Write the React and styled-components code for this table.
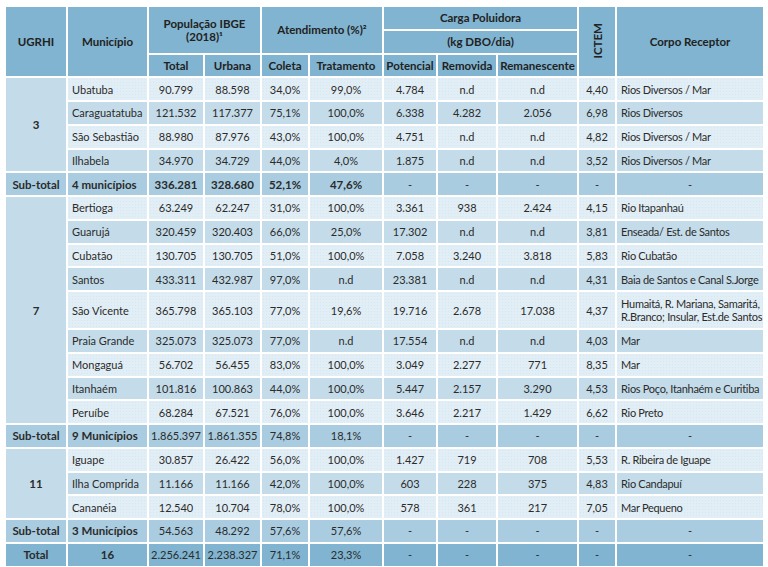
import React from "react";
import styled, { createGlobalStyle } from "styled-components";

const GlobalStyle = createGlobalStyle`
  html, body {
    margin: 0;
    padding: 0;
    background: #ffffff;
  }
  body {
    font-family: Lato, "Liberation Sans", Arial, sans-serif;
    color: #2b2b2b;
  }
`;

const Page = styled.div`
  padding: 5px 0 0 4px;
`;

const Table = styled.table`
  border-collapse: separate;
  border-spacing: 2px;
  table-layout: fixed;
  width: 761px;
  font-size: 11px;
`;

const HeadCell = styled.th`
  background: #80b4d0;
  color: #222;
  font-weight: bold;
  font-size: 11.5px;
  text-align: center;
  vertical-align: middle;
  padding: 0;
  height: 21.75px;
  line-height: 13px;
`;

const Vertical = styled.span`
  display: inline-block;
  writing-mode: vertical-rl;
  transform: rotate(180deg);
`;

const colors = {
  light: "#e2eef5",
  mid: "#c4dce9",
  sub: "#a9cce0",
  total: "#80b4d0",
};

const Row = styled.tr`
  height: ${(p) => (p.$tall ? "36px" : "21.75px")};
`;

const Cell = styled.td`
  background-color: ${(p) => colors[p.$tone]};
  background-image: ${(p) =>
    p.$tone === "light"
      ? "radial-gradient(rgba(200,222,235,0.45) 0.6px, transparent 0.8px)"
      : "none"};
  background-size: 3px 3px;
  text-align: ${(p) => (p.$left ? "left" : "center")};
  padding: ${(p) => (p.$left ? "0 0 0 4px" : "0")};
  font-weight: ${(p) => (p.$bold ? "bold" : "normal")};
  font-size: ${(p) => (p.$bold ? "11.5px" : "11px")};
  letter-spacing: ${(p) => (p.$tight ? "-0.3px" : "normal")};
  vertical-align: middle;
  line-height: 13px;
  white-space: nowrap;
  overflow: hidden;
`;

const GroupCell = styled.td`
  background: #c4dce9;
  text-align: center;
  font-weight: bold;
  font-size: 11.5px;
  vertical-align: middle;
  padding: 0;
`;

const widths = [60, 79, 54, 55, 46, 72, 52, 58, 79, 36, 146];

const groups = [
  {
    id: "3",
    rows: [
      ["Ubatuba", "90.799", "88.598", "34,0%", "99,0%", "4.784", "n.d", "n.d", "4,40", "Rios Diversos / Mar"],
      ["Caraguatatuba", "121.532", "117.377", "75,1%", "100,0%", "6.338", "4.282", "2.056", "6,98", "Rios Diversos"],
      ["São Sebastião", "88.980", "87.976", "43,0%", "100,0%", "4.751", "n.d", "n.d", "4,82", "Rios Diversos / Mar"],
      ["Ilhabela", "34.970", "34.729", "44,0%", "4,0%", "1.875", "n.d", "n.d", "3,52", "Rios Diversos / Mar"],
    ],
    sub: ["4 municípios", "336.281", "328.680", "52,1%", "47,6%"],
    subBold: true,
  },
  {
    id: "7",
    rows: [
      ["Bertioga", "63.249", "62.247", "31,0%", "100,0%", "3.361", "938", "2.424", "4,15", "Rio Itapanhaú"],
      ["Guarujá", "320.459", "320.403", "66,0%", "25,0%", "17.302", "n.d", "n.d", "3,81", "Enseada/ Est. de Santos"],
      ["Cubatão", "130.705", "130.705", "51,0%", "100,0%", "7.058", "3.240", "3.818", "5,83", "Rio Cubatão"],
      ["Santos", "433.311", "432.987", "97,0%", "n.d", "23.381", "n.d", "n.d", "4,31", "Baia de Santos e Canal S.Jorge"],
      ["São Vicente", "365.798", "365.103", "77,0%", "19,6%", "19.716", "2.678", "17.038", "4,37", ["Humaitá, R. Mariana, Samaritá,", "R.Branco; Insular, Est.de Santos"]],
      ["Praia Grande", "325.073", "325.073", "77,0%", "n.d", "17.554", "n.d", "n.d", "4,03", "Mar"],
      ["Mongaguá", "56.702", "56.455", "83,0%", "100,0%", "3.049", "2.277", "771", "8,35", "Mar"],
      ["Itanhaém", "101.816", "100.863", "44,0%", "100,0%", "5.447", "2.157", "3.290", "4,53", "Rios Poço, Itanhaém e Curitiba"],
      ["Peruíbe", "68.284", "67.521", "76,0%", "100,0%", "3.646", "2.217", "1.429", "6,62", "Rio Preto"],
    ],
    sub: ["9 Municípios", "1.865.397", "1.861.355", "74,8%", "18,1%"],
    subBold: false,
  },
  {
    id: "11",
    rows: [
      ["Iguape", "30.857", "26.422", "56,0%", "100,0%", "1.427", "719", "708", "5,53", "R. Ribeira de Iguape"],
      ["Ilha Comprida", "11.166", "11.166", "42,0%", "100,0%", "603", "228", "375", "4,83", "Rio Candapuí"],
      ["Cananéia", "12.540", "10.704", "78,0%", "100,0%", "578", "361", "217", "7,05", "Mar Pequeno"],
    ],
    sub: ["3 Municípios", "54.563", "48.292", "57,6%", "57,6%"],
    subBold: false,
  },
];

function DataRow({ row, tone, group, span }) {
  const [name, ...vals] = row;
  const corpo = vals[8];
  const tall = Array.isArray(corpo);
  return (
    <Row $tall={tall}>
      {group && <GroupCell rowSpan={span}>{group}</GroupCell>}
      <Cell $tone={tone} $left>{name}</Cell>
      {vals.slice(0, 8).map((v, i) => (
        <Cell key={i} $tone={tone}>{v}</Cell>
      ))}
      <Cell $tone={tone} $left $tight>
        {tall ? (
          <>
            {corpo[0]}
            <br />
            {corpo[1]}
          </>
        ) : (
          corpo
        )}
      </Cell>
    </Row>
  );
}

function SubRow({ label, vals, bold, tone, centerName }) {
  const [name, ...nums] = vals;
  return (
    <Row>
      <Cell $tone={tone} $bold>{label}</Cell>
      <Cell $tone={tone} $left={!centerName} $bold>{name}</Cell>
      {nums.map((v, i) => (
        <Cell key={i} $tone={tone} $bold={bold}>{v}</Cell>
      ))}
      {["-", "-", "-", "-", "-"].map((v, i) => (
        <Cell key={"d" + i} $tone={tone}>{v}</Cell>
      ))}
    </Row>
  );
}

export default function App() {
  return (
    <Page>
      <GlobalStyle />
      <Table>
        <colgroup>
          {widths.map((w, i) => (
            <col key={i} style={{ width: w }} />
          ))}
        </colgroup>
        <thead>
          <tr>
            <HeadCell rowSpan={3}>UGRHI</HeadCell>
            <HeadCell rowSpan={3}>Município</HeadCell>
            <HeadCell colSpan={2} rowSpan={2}>
              População IBGE
              <br />
              (2018)¹
            </HeadCell>
            <HeadCell colSpan={2} rowSpan={2}>Atendimento (%)²</HeadCell>
            <HeadCell colSpan={3}>Carga Poluidora</HeadCell>
            <HeadCell rowSpan={3}>
              <Vertical>ICTEM</Vertical>
            </HeadCell>
            <HeadCell rowSpan={3}>Corpo Receptor</HeadCell>
          </tr>
          <tr>
            <HeadCell colSpan={3}>(kg DBO/dia)</HeadCell>
          </tr>
          <tr>
            <HeadCell>Total</HeadCell>
            <HeadCell>Urbana</HeadCell>
            <HeadCell>Coleta</HeadCell>
            <HeadCell>Tratamento</HeadCell>
            <HeadCell>Potencial</HeadCell>
            <HeadCell>Removida</HeadCell>
            <HeadCell>Remanescente</HeadCell>
          </tr>
        </thead>
        <tbody>
          {groups.map((g) => (
            <React.Fragment key={g.id}>
              {g.rows.map((r, i) => (
                <DataRow
                  key={r[0]}
                  row={r}
                  tone={i % 2 === 0 ? "light" : "mid"}
                  group={i === 0 ? g.id : null}
                  span={g.rows.length}
                />
              ))}
              <SubRow label="Sub-total" vals={g.sub} bold={g.subBold} tone="sub" />
            </React.Fragment>
          ))}
          <SubRow
            label="Total"
            vals={["16", "2.256.241", "2.238.327", "71,1%", "23,3%"]}
            bold={false}
            tone="total"
            centerName
          />
        </tbody>
      </Table>
    </Page>
  );
}
